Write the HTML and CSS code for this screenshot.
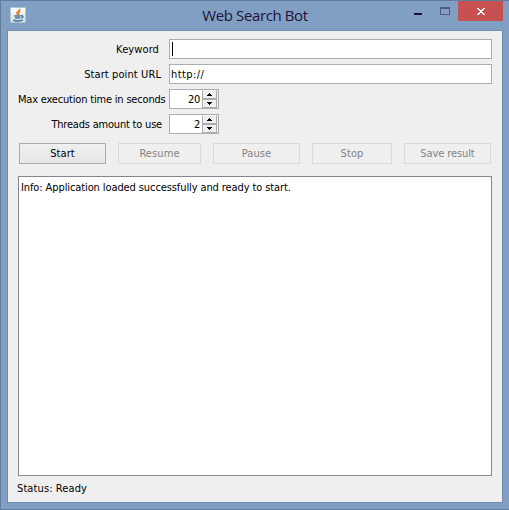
FILE: index.html
```html
<!DOCTYPE html>
<html lang="en">
<head>
<meta charset="utf-8">
<title>Web Search Bot</title>
<link rel="stylesheet" href="styles.css">
</head>
<body>
<div class="window">
  <header class="titlebar">
    <svg class="app-icon" width="16" height="16" viewBox="0 0 16 16">
      <defs><linearGradient id="g" x2="0" y2="1"><stop offset="0" stop-color="#fff"/><stop offset="1" stop-color="#d3dbe2"/></linearGradient></defs>
      <rect x=".5" y=".5" width="15" height="15" rx="1" fill="url(#g)" stroke="#b4c2cf"/>
      <path d="M9.8 1.8C10 4 6.2 4.6 6.8 6.4L7.8 8M10.4 4.2C8.2 5.2 8.3 6 8.8 6.8L8.4 8.2" fill="none" stroke="#dc7d22" stroke-width="1.4"/>
      <path d="M4.3 9H10.7M5 11H10.2M11 8.8c2.6-.6 2.6 1.7.2 2.3M3.3 13.2c2.5.9 7.2.8 9.4-.2" fill="none" stroke="#4578a3" stroke-width="1.5"/>
    </svg>
    <h1 class="title">Web Search Bot</h1>
    <div class="controls">
      <span class="minimize"></span>
      <span class="maximize"></span>
      <button class="close" aria-label="Close">
        <svg width="8" height="7" viewBox="0 0 8 7" shape-rendering="crispEdges"><path fill="#fff" d="M0 0h2v1h1v1h2V1h1V0h2v1H7v1H6v1H5v1h1v1h1v1h1v1H6V6H5V5H3v1H2v1H0V6h1V5h1V4h1V3H2V2H1V1H0z"/></svg>
      </button>
    </div>
  </header>
  <main class="client">
    <div class="form">
      <label class="label keyword">Keyword</label><div class="field"><span class="caret"></span></div>
      <label class="label url">Start point URL</label><div class="field"><span class="url-text">http://</span></div>
      <label class="label time">Max execution time in seconds</label>
      <div class="spinner"><span class="number">20</span><span class="arrows"><i><svg width="5" height="3" shape-rendering="crispEdges"><path d="M2 0h1v1h1v1h1v1H0V2h1V1h1z"/></svg></i><i><svg width="5" height="3" shape-rendering="crispEdges"><path d="M0 0h5v1H4v1H3v1H2V2H1V1H0z"/></svg></i></span></div>
      <label class="label threads">Threads amount to use</label>
      <div class="spinner"><span class="number">2</span><span class="arrows"><i><svg width="5" height="3" shape-rendering="crispEdges"><path d="M2 0h1v1h1v1h1v1H0V2h1V1h1z"/></svg></i><i><svg width="5" height="3" shape-rendering="crispEdges"><path d="M0 0h5v1H4v1H3v1H2V2H1V1H0z"/></svg></i></span></div>
    </div>
    <div class="buttons">
      <button class="button">Start</button>
      <button class="button" disabled>Resume</button>
      <button class="button" disabled>Pause</button>
      <button class="button" disabled>Stop</button>
      <button class="button save" disabled>Save result</button>
    </div>
    <div class="log"><span class="log-text">Info: Application loaded successfully and ready to start.</span></div>
    <div class="status"><span class="status-text">Status: Ready</span></div>
  </main>
</div>
</body>
</html>
```
FILE: styles.css
```css
* { box-sizing: border-box; }
body {
  margin: 0;
  font: 11px/14px "DejaVu Sans Condensed", "DejaVu Sans", sans-serif;
  font-stretch: condensed;
  letter-spacing: 0.1px;
  color: #000;
}
.window {
  width: 509px;
  height: 510px;
  padding: 0 6px 7px;
  background: #809fc3;
  border: solid #607d9e;
  border-width: 1px 0 1px 1px;
}
.titlebar {
  display: grid;
  grid-template-columns: 92px 1fr 92px;
  height: 29px;
}
.app-icon { margin: 6px 0 0 3px; }
.title {
  margin: 4px 0 0;
  text-align: center;
  font: 15px/20px "Open Sans", sans-serif;
  letter-spacing: -0.38px;
  color: #23103a;
}
.controls { display: flex; align-items: flex-start; }
.minimize { width: 8px; height: 2px; margin: 12px 18px 0 3px; background: #2b0a3d; }
.maximize { width: 10px; height: 8px; margin: 6px 8px 0 0; border: 1px solid #535882; border-top-width: 2px; }
.close {
  display: flex;
  width: 45px;
  height: 20px;
  padding: 7px 0 0 19px;
  border: 0;
  background: #c75050;
}
.client {
  height: 473px;
  width: 496px;
  padding: 8px 10px 0;
  background: #efefef;
  border: 1px solid #6f8db0;
}
.form {
  display: grid;
  grid-template-columns: 151px 323px;
  grid-auto-rows: 20px;
  row-gap: 5px;
}
.label { padding: 4px 0 2px; text-align: right; white-space: nowrap; }
.keyword { padding-right: 10px; }
.url { padding-right: 8px; }
.time { padding-right: 5px; letter-spacing: -0.19px; }
.threads { padding-right: 7px; letter-spacing: -0.2px; }
.field, .spinner { background: #fff; border: 1px solid #abadb3; }
.field { padding: 2px 1px; }
.url-text { display: block; padding-top: 1px; letter-spacing: 0.4px; }
.caret { display: block; width: 1px; height: 14px; margin-left: 1px; background: #000; }
.spinner { display: flex; justify-content: space-between; width: 50px; }
.number { width: 30px; padding-top: 3px; text-align: right; letter-spacing: -0.3px; }
.arrows { display: flex; flex-direction: column; width: 16px; padding: 0 1px 0 0; background: #efefef; }
.arrows i {
  display: flex;
  justify-content: center;
  align-items: center;
  height: 9px;
  border: 1px solid #acacac;
  border-top-color: #f5f5f5;
}
.arrows i + i { border-top-color: #acacac; }
.buttons {
  display: grid;
  grid-template-columns: 87px 83px 87px 80px 87px;
  column-gap: 12px;
  margin: 9px 0 12px 1px;
}
.button {
  height: 21px;
  padding: 1px 0 0;
  border: 1px solid #acacac;
  background: linear-gradient(#f0f0f0, #e6e6e6);
  font: inherit;
  font-stretch: condensed;
  letter-spacing: inherit;
  color: #000;
}
.button:disabled { background: #efefef; border-color: #d9d9d9; color: #838383; }
.save { letter-spacing: -0.1px; }
.log { height: 300px; padding: 4px 2px; background: #fff; border: 1px solid #828790; letter-spacing: -0.1px; }
.status { margin: 6px 0 0 -1px; }
```
